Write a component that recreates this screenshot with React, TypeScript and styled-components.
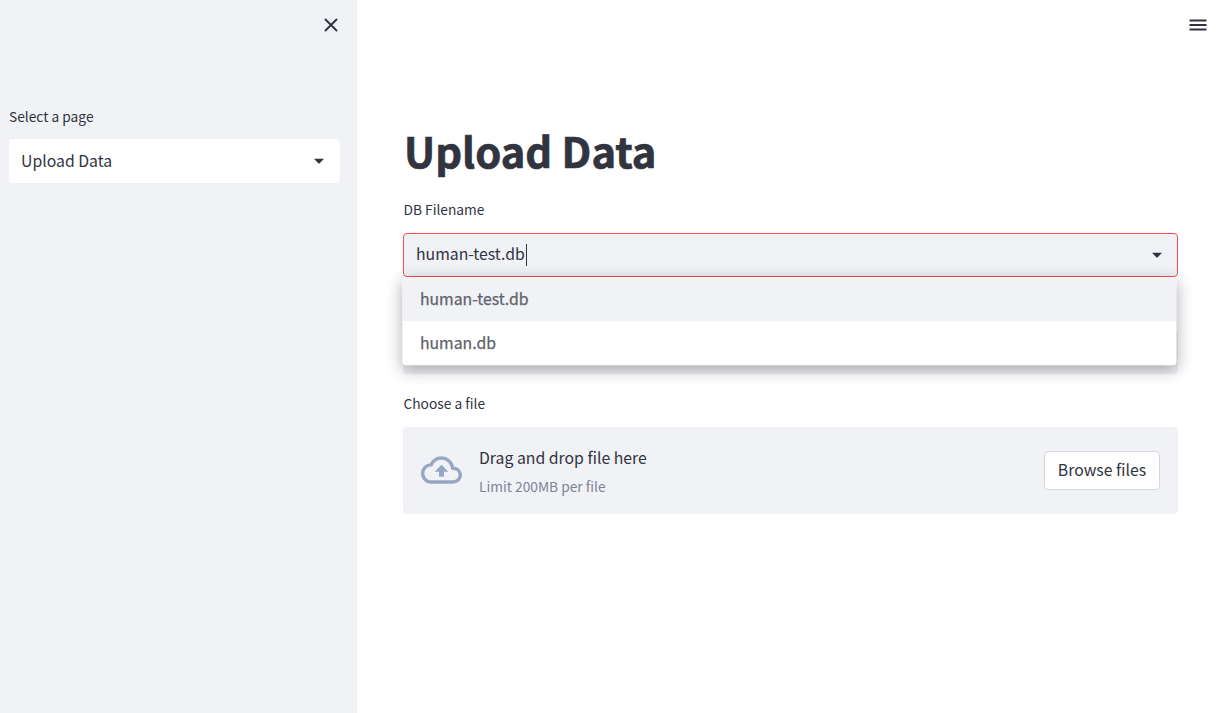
import React from "react";
import styled, { createGlobalStyle } from "styled-components";

const GlobalStyle = createGlobalStyle`
  * { box-sizing: border-box; }
  body {
    margin: 0;
    background: #ffffff;
    color: #31333f;
    font-family: "Noto Sans CJK SC", "Noto Sans", sans-serif;
    font-size: 15.8px;
    overflow: hidden;
  }
`;

const Page = styled.div`
  display: flex;
  height: 713px;
`;

const Sidebar = styled.aside`
  width: 357px;
  flex: none;
  padding: 16px 17px 0 9px;
  background: #f0f2f6;
`;

const SidebarHeader = styled.div`
  display: flex;
  justify-content: flex-end;
  height: 91px;
`;

const Main = styled.main`
  flex: 1;
  display: flex;
  flex-direction: column;
`;

const Toolbar = styled.header`
  display: flex;
  justify-content: flex-end;
  height: 122px;
  padding: 16px 9px 0 0;
`;

const Content = styled.div`
  padding: 0 38px 0 46px;
`;

const Title = styled.h1`
  margin: 0;
  padding-left: 1px;
  height: 78px;
  line-height: 56px;
  font-size: 41.7px;
  font-weight: 700;
  -webkit-text-stroke: 0.7px #31333f;
`;

const Label = styled.div<{ $compact?: boolean }>`
  height: ${(p) => (p.$compact ? 32 : 33)}px;
  padding-left: ${(p) => (p.$compact ? 0 : 0.5)}px;
  line-height: 18px;
  font-size: 13.75px;
`;

const Field = styled.div`
  position: relative;
`;

const SelectBox = styled.div<{ $focused?: boolean; $tint?: boolean }>`
  display: flex;
  align-items: center;
  justify-content: space-between;
  height: 44px;
  padding: 0 11px;
  border: 1px solid ${(p) => (p.$focused ? "#ff4b4b" : "transparent")};
  border-radius: 4px;
  background: ${(p) => (p.$tint ? "#f0f2f6" : "#ffffff")};
  background-clip: ${(p) => (p.$focused ? "padding-box" : "border-box")};
`;

const SelectValue = styled.span<{ $editing?: boolean }>`
  display: flex;
  align-items: center;
  height: 24px;
  line-height: 24px;
  padding-bottom: ${(p) => (p.$editing ? 2 : 0)}px;
  padding-left: ${(p) => (p.$editing ? 1 : 0)}px;
`;

const Caret = styled.span`
  width: 1px;
  height: 22px;
  margin-top: 2px;
  margin-left: 1px;
  background: #31333f;
`;

const Menu = styled.ul`
  position: absolute;
  top: 44px;
  left: 0;
  width: 774px;
  margin: 0;
  padding: 0;
  list-style: none;
  border-radius: 4px;
  overflow: hidden;
  background: #ffffff;
  box-shadow: 0 4px 16px rgba(0, 0, 0, 0.32);
  transform: translate(-0.6px, 0.3px);
`;

const MenuItem = styled.li<{ $active?: boolean }>`
  height: 44px;
  padding-left: 17.5px;
  line-height: 44px;
  color: #5f616b;
  -webkit-text-stroke: 0.25px #5f616b;
  background: ${(p) => (p.$active ? "#f0f2f6" : "#ffffff")};
`;

const CoveredField = styled.div`
  padding-top: 53px;
  margin-bottom: 20px;
`;

const Dropzone = styled.div`
  display: flex;
  align-items: center;
  height: 87px;
  padding: 0 18px;
  border-radius: 4px;
  background: #f0f2f6;
`;

const DropText = styled.div`
  flex: 1;
  padding-top: 3px;
  margin-left: 17px;
`;

const DropTitle = styled.div`
  height: 29px;
  line-height: 28px;
`;

const DropHint = styled.div`
  height: 28px;
  line-height: 26px;
  font-size: 13.75px;
  color: #808495;
`;

const BrowseButton = styled.button`
  width: 116px;
  height: 39px;
  padding: 0 0 2px;
  border: 1px solid #d6d7dc;
  border-radius: 4px;
  background: #ffffff;
  color: #31333f;
  font: inherit;
  line-height: 35px;
`;

const CloseIcon = () => (
  <svg width="18" height="18" viewBox="0 0 18 18" stroke="#31333f" strokeWidth="1.9" strokeLinecap="round">
    <path d="M3.5 3.5 14.5 14.5M14.5 3.5 3.5 14.5" />
  </svg>
);

const MenuIcon = () => (
  <svg width="18" height="18" viewBox="0 0 18 18" fill="#31333f">
    <path d="M.5 3.5h17v1.9H.5zM.5 8h17v2H.5zM.5 12.6h17v1.9H.5z" />
  </svg>
);

const ArrowIcon = () => (
  <svg width="18" height="18" viewBox="0 0 18 18" fill="#31333f">
    <path d="M4 6.8h10l-4.3 4.4a1 1 0 0 1-1.4 0z" />
  </svg>
);

const CloudIcon = () => (
  <svg width="41" height="42" viewBox="0 0.3 24 24.6" fill="#97a6c3">
    <path d="M19.35 10.04A7.49 7.49 0 0 0 12 4C9.11 4 6.6 5.64 5.35 8.04A5.994 5.994 0 0 0 0 14c0 3.31 2.69 6 6 6h13c2.76 0 5-2.24 5-5 0-2.64-2.05-4.78-4.65-4.96zM19 18H6c-2.21 0-4-1.79-4-4 0-2.05 1.53-3.76 3.56-3.97l1.07-.11.5-.95A5.469 5.469 0 0 1 12 6c2.62 0 4.88 1.86 5.39 4.43l.3 1.5 1.53.11A2.98 2.98 0 0 1 22 15c0 1.65-1.35 3-3 3zM8 13h2.55v3h2.9v-3H16l-4-4z" />
  </svg>
);

export default function App() {
  return (
    <Page>
      <GlobalStyle />
      <Sidebar>
        <SidebarHeader>
          <CloseIcon />
        </SidebarHeader>
        <Label $compact>Select a page</Label>
        <SelectBox>
          <SelectValue>Upload Data</SelectValue>
          <ArrowIcon />
        </SelectBox>
      </Sidebar>
      <Main>
        <Toolbar>
          <MenuIcon />
        </Toolbar>
        <Content>
          <Title>Upload Data</Title>
          <Label>DB Filename</Label>
          <Field>
            <SelectBox $focused $tint>
              <SelectValue $editing>
                human-test.db
                <Caret />
              </SelectValue>
              <ArrowIcon />
            </SelectBox>
            <Menu>
              <MenuItem $active>human-test.db</MenuItem>
              <MenuItem>human.db</MenuItem>
            </Menu>
          </Field>
          <CoveredField>
            <SelectBox $tint />
          </CoveredField>
          <Label>Choose a file</Label>
          <Dropzone>
            <CloudIcon />
            <DropText>
              <DropTitle>Drag and drop file here</DropTitle>
              <DropHint>Limit 200MB per file</DropHint>
            </DropText>
            <BrowseButton>Browse files</BrowseButton>
          </Dropzone>
        </Content>
      </Main>
    </Page>
  );
}
